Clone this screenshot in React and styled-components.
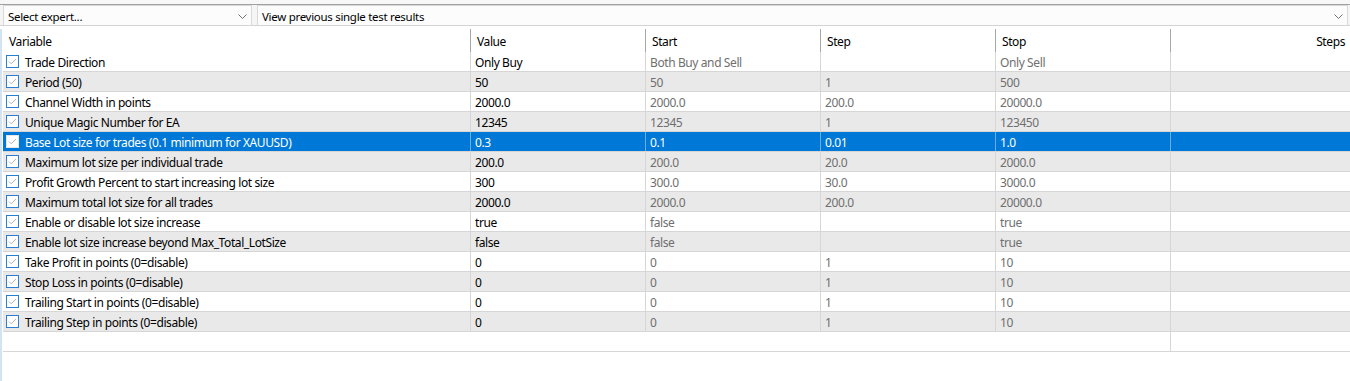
import React from 'react';
import styled, { createGlobalStyle } from 'styled-components';

const GlobalStyle = createGlobalStyle`
  html, body {
    margin: 0;
    background: #fff;
  }
  body {
    font-family: 'Segoe UI', 'Noto Sans', 'Liberation Sans', sans-serif;
    font-size: 12px;
    letter-spacing: -0.4px;
    color: #000;
  }
`;

const COLS = '467px 175px 175px 175px 175px 1fr';

const ROWS = [
  ['Trade Direction', 'Only Buy', 'Both Buy and Sell', '', 'Only Sell'],
  ['Period (50)', '50', '50', '1', '500'],
  ['Channel Width in points', '2000.0', '2000.0', '200.0', '20000.0'],
  ['Unique Magic Number for EA', '12345', '12345', '1', '123450'],
  ['Base Lot size for trades (0.1 minimum for XAUUSD)', '0.3', '0.1', '0.01', '1.0'],
  ['Maximum lot size per individual trade', '200.0', '200.0', '20.0', '2000.0'],
  ['Profit Growth Percent to start increasing lot size', '300', '300.0', '30.0', '3000.0'],
  ['Maximum total lot size for all trades', '2000.0', '2000.0', '200.0', '20000.0'],
  ['Enable or disable lot size increase', 'true', 'false', '', 'true'],
  ['Enable lot size increase beyond Max_Total_LotSize', 'false', 'false', '', 'true'],
  ['Take Profit in points (0=disable)', '0', '0', '1', '10'],
  ['Stop Loss in points (0=disable)', '0', '0', '1', '10'],
  ['Trailing Start in points (0=disable)', '0', '0', '1', '10'],
  ['Trailing Step in points (0=disable)', '0', '0', '1', '10'],
];
const SELECTED = 4;

const Window = styled.div`
  width: 1350px;
  height: 381px;
  overflow: hidden;
  background: #fff;
`;

const TopRule = styled.div`
  height: 4px;
  background: #f7f7f7;
  border-bottom: 1px solid #a0a0a0;
`;

const Toolbar = styled.div`
  display: flex;
  gap: 5px;
  padding: 0 2px 0 3px;
  height: 20px;
  background: #f5f5f5;
  border-bottom: 1px solid #d4d4d4;
`;

const Select = styled.div`
  display: flex;
  align-items: center;
  justify-content: space-between;
  box-sizing: border-box;
  height: 20px;
  width: ${p => (p.$grow ? 'auto' : '249px')};
  flex: ${p => (p.$grow ? 1 : 'none')};
  padding: 1px 4px 0 4px;
  background: #fcfcfc;
  border: 1px solid #d9d9d9;
  border-bottom: none;
  font-size: 11.5px;
  letter-spacing: -0.3px;
  color: #000;
`;

const Chevron = () => (
  <svg width="9" height="5" viewBox="0 0 9 5">
    <path d="M0.5 0.5 L4.5 4.5 L8.5 0.5" fill="none" stroke="#707070" strokeWidth="1" />
  </svg>
);

const Panel = styled.div`
  margin-top: 3px;
  border-left: 2px solid #d3e3f4;
  padding-left: 1px;
  height: 400px;
`;

const Row = styled.div`
  display: grid;
  grid-template-columns: ${COLS};
  box-sizing: border-box;
  height: ${p => (p.$head ? '23px' : '20px')};
  background: ${p => (p.$selected ? '#0078d7' : p.$alt ? '#e9e9e9' : '#fff')};
  border-bottom: ${p => (p.$head ? 'none' : '1px solid #d6d6d6')};
  color: ${p => (p.$selected ? '#fff' : '#000')};
`;

const HeadCell = styled.div`
  display: flex;
  align-items: center;
  justify-content: ${p => (p.$right ? 'flex-end' : 'flex-start')};
  padding: 2px 5px 0 6px;
  border-left: ${p => (p.$first ? 'none' : '1px solid #a8a8a8')};
  white-space: nowrap;
`;

const Cell = styled.div`
  display: flex;
  align-items: center;
  gap: 6px;
  padding: ${p => (p.$first ? '0 0 0 3px' : '2px 0 0 4px')};
  border-left: ${p =>
    p.$first || p.$plain ? 'none' : `1px solid ${p.$selected ? '#6aaee6' : '#d6d6d6'}`};
  color: ${p => (p.$selected ? '#fff' : p.$dim ? '#6f6f6f' : '#000')};
  white-space: nowrap;
  overflow: hidden;
`;

const Label = styled.span`
  padding-top: 2px;
`;

const Box = styled.span`
  display: inline-flex;
  align-items: center;
  justify-content: center;
  box-sizing: border-box;
  width: 13px;
  height: 13px;
  background: #fff;
  border: 1px solid ${p => (p.$selected ? '#e6e6e6' : '#2a7fd0')};
`;

const Check = ({ selected }) => (
  <Box $selected={selected}>
    <svg width="11" height="11" viewBox="0 0 11 11">
      <path d="M2 5.5 L4.3 7.8 L9 3" fill="none" stroke="#b4b4b4" strokeWidth="1" />
    </svg>
  </Box>
);

const Header = () => (
  <Row $head>
    <HeadCell $first>Variable</HeadCell>
    <HeadCell>Value</HeadCell>
    <HeadCell>Start</HeadCell>
    <HeadCell>Step</HeadCell>
    <HeadCell>Stop</HeadCell>
    <HeadCell $right>Steps</HeadCell>
  </Row>
);

const ParamRow = ({ cells, index }) => {
  const selected = index === SELECTED;
  const [name, value, start, step, stop] = cells;
  return (
    <Row $alt={index % 2 === 1} $selected={selected}>
      <Cell $first $selected={selected}>
        <Check selected={selected} />
        <Label>{name}</Label>
      </Cell>
      <Cell $selected={selected}>{value}</Cell>
      <Cell $selected={selected} $dim>{start}</Cell>
      <Cell $selected={selected} $dim>{step}</Cell>
      <Cell $selected={selected} $dim>{stop}</Cell>
      <Cell $selected={selected} />
    </Row>
  );
};

const App = () => (
  <Window>
    <GlobalStyle />
    <TopRule />
    <Toolbar>
      <Select>
        Select expert...
        <Chevron />
      </Select>
      <Select $grow>
        View previous single test results
        <Chevron />
      </Select>
    </Toolbar>
    <Panel>
      <Header />
      {ROWS.map((r, i) => (
        <ParamRow key={i} cells={r} index={i} />
      ))}
      <Row>
        <Cell $first />
        <Cell $plain />
        <Cell $plain />
        <Cell $plain />
        <Cell $plain />
        <Cell />
      </Row>
    </Panel>
  </Window>
);

export default App;
